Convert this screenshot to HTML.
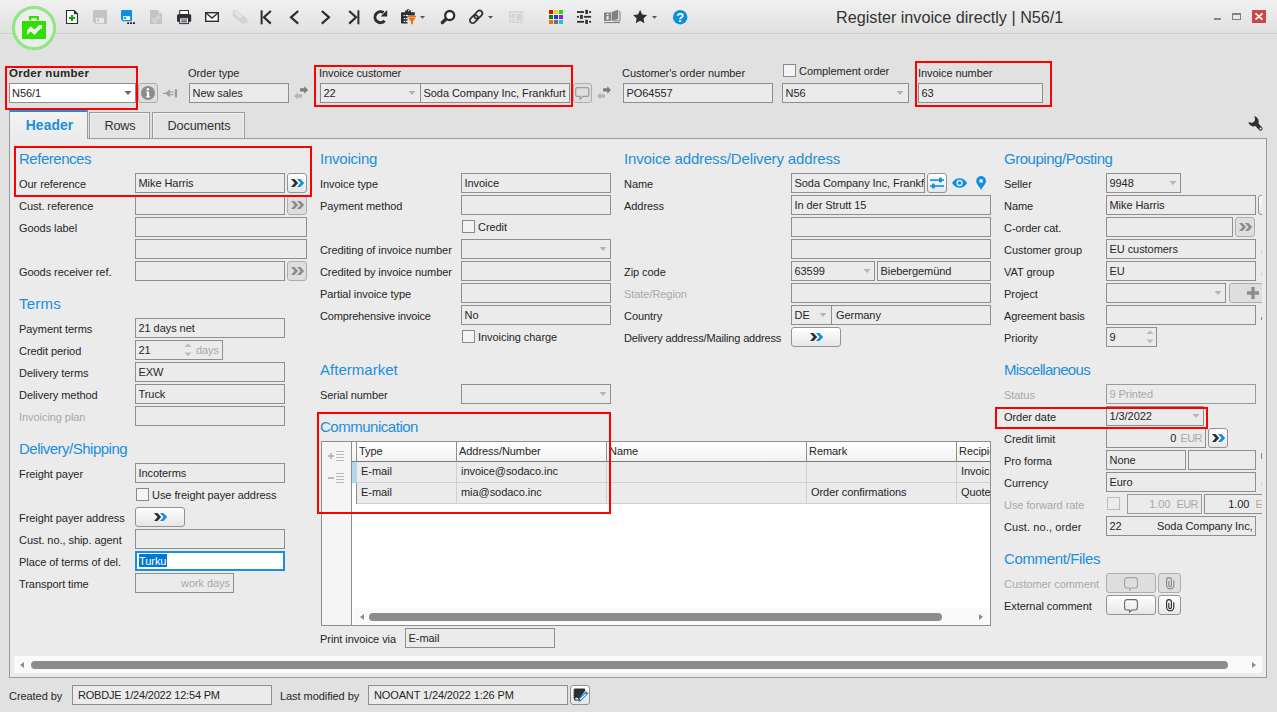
<!DOCTYPE html><html><head><meta charset="utf-8"><title>Register invoice directly | N56/1</title><style>
*{box-sizing:border-box;margin:0;padding:0}
html,body{width:1277px;height:712px;overflow:hidden;background:#e1e1e1}
body{font-family:"Liberation Sans",sans-serif;font-size:11px;color:#262626;position:relative;letter-spacing:-0.06px}
.a{position:absolute;white-space:nowrap}
#tb{left:0;top:0;width:1277px;height:33px;background:linear-gradient(#f0f0f0,#e1e1e1)}
#tbl{left:0;top:33px;width:1277px;height:1px;background:#d0d0d0}
.i{position:absolute;height:20px;border:1px solid #8e8e8e;background:#ebebeb;line-height:18px;padding:0 3px 0 2.500px;white-space:nowrap;overflow:hidden}
.i.o{background:#ebebeb}
.i.w{background:#fff}
.i.d{color:#a9a9a9;border-color:#9a9a9a}
.i.r{text-align:right;padding-right:3px}
.e{letter-spacing:-0.55px}
.l{position:absolute;height:20px;line-height:22px;white-space:nowrap}
.l.d{color:#a9a9a9}
.l.c{line-height:20px}
.l.b{font-weight:bold;font-size:11.5px;letter-spacing:0.3px}
.t{position:absolute;font-size:15px;color:#1b8fdc;height:20px;line-height:22px;white-space:nowrap;letter-spacing:-0.45px}
.bt{position:absolute;height:20px;border:1px solid #939393;border-radius:3px;background:linear-gradient(#ffffff,#e6e6e6)}
.bt.d{background:#dedede;border-color:#adadad}
.bt svg{position:absolute;left:50%;top:50%}
.cb{position:absolute;width:13px;height:13px;border:1px solid #8a8a8a;background:#f4f4f4}
.cb.d{border-color:#bdbdbd;background:#ececec}
.red{position:absolute;border:2px solid #fd0000}
.g{color:#a9a9a9}
svg{position:absolute;overflow:visible}
</style></head><body>
<div id="tb" class="a"></div><div id="tbl" class="a"></div>
<svg style="left:11px;top:5px" width="46" height="46" viewBox="0 0 46 46">
<circle cx="23" cy="23" r="20.600" fill="#ededed" stroke="#8fe883" stroke-width="3.200"/>
<rect x="11" y="16" width="24" height="18" rx="0.700" fill="#2fdf00"/>
<path d="M19 15.200V12.200H26.900V15.200" fill="none" stroke="#2fdf00" stroke-width="2.200"/>
<path d="M16 25.200L19.700 21.300 23.300 24.600 27.600 20.900 26.500 20.100H31V24.400L29.900 23.300 23.500 29.900 19.700 26.600 16 29.700z" fill="#f3eef3"/>
</svg>
<svg style="left:66px;top:10px" width="12" height="14" viewBox="0 0 12 14"><path d="M0.500 0.500h7.700L11.500 3.800v9.700H0.500z" fill="#fff" stroke="#2b2f33" stroke-width="1.100"/><path d="M7.900 0.400v3.800h3.800z" fill="#2b2f33"/><path d="M5 4.900h2.100v2h2v2.100h-2v2H5v-2H3V6.900h2z" fill="#0fa514"/></svg>
<svg style="left:93px;top:10px" width="14" height="14" viewBox="0 0 14 14"><path d="M1.5 0h11.5a1 1 0 0 1 1 1v12a1 1 0 0 1-1 1H2.2L0 11.8V1.5A1.5 1.5 0 0 1 1.5 0z" fill="#c4c4c4"/><rect x="2.800" y="7.800" width="8.200" height="5.300" fill="#e9e9e9"/><rect x="4.100" y="8.900" width="1.800" height="2.900" fill="#c4c4c4"/></svg>
<svg style="left:121px;top:10px" width="16" height="15" viewBox="0 0 16 15"><path d="M1.2 0h9a0.8 0.8 0 0 1 0.8 0.8v9.600a0.800 0.800 0 0 1-0.800 0.800H1.800L0 9.600V1.200A1.200 1.200 0 0 1 1.200 0z" fill="#0f8fe2"/><rect x="2.100" y="6.200" width="7" height="3.800" fill="#fff"/><rect x="2.900" y="7.100" width="2.200" height="1.900" fill="#0f8fe2"/><rect x="6.200" y="12.300" width="1.900" height="1.700" fill="#1a1a1a"/><rect x="9.100" y="12.300" width="1.900" height="1.700" fill="#1a1a1a"/><rect x="12" y="12.300" width="1.900" height="1.700" fill="#1a1a1a"/></svg>
<svg style="left:150px;top:10px" width="12" height="14" viewBox="0 0 12 14"><path d="M0 0h8.300L12 3.600V14H0z" fill="#c4c4c4"/><path d="M8.300 0v3.600H12z" fill="#e2e2e2"/><path d="M2.600 8.800l2.300 2.600 5-5.300" fill="none" stroke="#e6e6e6" stroke-width="2.800" stroke-linejoin="miter"/><path d="M2.600 8.800l2.300 2.600 5-5.300" fill="none" stroke="#c4c4c4" stroke-width="1.200"/></svg>
<svg style="left:177px;top:10px" width="15" height="14" viewBox="0 0 15 14"><rect x="2.700" y="0.500" width="8.800" height="4" fill="#fff" stroke="#2b2f33" stroke-width="1"/><rect x="0" y="4.200" width="14.200" height="7.700" rx="1.300" fill="#2b2f33"/><rect x="2.700" y="7.900" width="8.800" height="5.700" fill="#fff" stroke="#2b2f33" stroke-width="1"/><rect x="4.200" y="9.500" width="5.800" height="1" fill="#2b2f33"/><rect x="4.200" y="11.300" width="5.800" height="1" fill="#2b2f33"/></svg>
<svg style="left:205px;top:12px" width="14" height="10" viewBox="0 0 14 10"><rect x="0.7" y="0.7" width="12.6" height="8.6" fill="#fff" stroke="#2b2f33" stroke-width="1.4"/><path d="M1 1l6 5 6-5" fill="none" stroke="#2b2f33" stroke-width="1.4"/></svg>
<svg style="left:232px;top:10px" width="16" height="14" viewBox="0 0 16 14"><path d="M0.800 0.500h3.200L15.300 8.500v4.800H9.500L0.800 6z" fill="#d4d4d4"/><path d="M1.800 1.500h1.900l6.300 4.600v1.800H7.800L1.800 3.300z" fill="#e6e6e6"/></svg>
<svg style="left:260px;top:10px" width="12" height="15" viewBox="0 0 12 15"><rect x="0.6" y="0.3" width="2" height="14" fill="#2b2f33"/><path d="M10.8 1L4 7.3l6.8 6.3" fill="none" stroke="#2b2f33" stroke-width="2.2"/></svg>
<svg style="left:289px;top:10px" width="11" height="15" viewBox="0 0 11 15"><path d="M9.2 1L2 7.3l7.200 6.3" fill="none" stroke="#2b2f33" stroke-width="2.2"/></svg>
<svg style="left:320px;top:10px" width="11" height="15" viewBox="0 0 11 15"><path d="M1.800 1L9 7.3l-7.200 6.3" fill="none" stroke="#2b2f33" stroke-width="2.2"/></svg>
<svg style="left:348px;top:10px" width="12" height="15" viewBox="0 0 12 15"><rect x="9.4" y="0.3" width="2" height="14" fill="#2b2f33"/><path d="M1.2 1L8 7.3l-6.800 6.3" fill="none" stroke="#2b2f33" stroke-width="2.2"/></svg>
<svg style="left:373px;top:10px" width="15" height="15" viewBox="0 0 15 15"><path d="M11.600 10.800A5.500 5.500 0 1 1 10.600 2.600" fill="none" stroke="#2b2f33" stroke-width="3"/><path d="M14.200 0v6.400H7.600z" fill="#2b2f33"/></svg>
<svg style="left:401px;top:9px" width="16" height="17" viewBox="0 0 16 17"><path d="M0.800 3.200h3.400v-1.600h1.400a1.500 1.500 0 0 1 3 0h1.400v1.600h3.800v3.200H6.500v8.100H0.800a0.800 0.800 0 0 1-0.800-0.800V4a0.800 0.800 0 0 1 0.800-0.800z" fill="#2b2f33"/><circle cx="7.500" cy="1.700" r="0.700" fill="#f0f0f0"/><g fill="#f0f0f0"><rect x="2.700" y="5.900" width="1.200" height="1.200"/><rect x="4.700" y="5.900" width="2.400" height="1.200"/><rect x="2.700" y="9" width="1.200" height="1.200"/><rect x="4.700" y="9" width="2" height="1.200"/><rect x="2.700" y="11.800" width="1.200" height="1.200"/><rect x="4.700" y="11.800" width="2.300" height="1.200"/></g><path d="M6.700 6.900h8.300v1.100H6.700z" fill="#f06a10"/><path d="M6.900 8.600h7.900L12 12.200v3.600l-2.100-1.500v-2.100z" fill="#f06a10"/></svg>
<svg style="left:420.0px;top:16px" width="5" height="3" viewBox="0 0 5 3"><path d="M0 0h5L2.500 2.800z" fill="#555"/></svg>
<svg style="left:440px;top:10px" width="16" height="15" viewBox="0 0 16 15"><circle cx="9.700" cy="5.500" r="4.500" fill="#fff" stroke="#2b2f33" stroke-width="2.300"/><path d="M5.600 9.600L2.400 12.500" stroke="#2b2f33" stroke-width="3.400" stroke-linecap="round"/></svg>
<svg style="left:468px;top:10px" width="16" height="15" viewBox="0 0 16 15"><g fill="none" stroke="#2b2f33" stroke-width="1.700" transform="rotate(-45 8.100 6.900)"><rect x="0.400" y="4.100" width="9.200" height="5.600" rx="2.800"/><rect x="6.600" y="4.100" width="9.200" height="5.600" rx="2.800"/></g></svg>
<svg style="left:487.5px;top:16px" width="5" height="3" viewBox="0 0 5 3"><path d="M0 0h5L2.500 2.800z" fill="#555"/></svg>
<svg style="left:509px;top:11px" width="14" height="12" viewBox="0 0 14 12"><rect x="0.700" y="0.700" width="12.600" height="10.600" rx="1" fill="none" stroke="#d4d4d4" stroke-width="1.400"/><rect x="2.300" y="2.700" width="3.700" height="4.300" fill="#d4d4d4"/><rect x="2.300" y="8" width="3.700" height="1.700" fill="#d4d4d4"/><rect x="7.200" y="2.700" width="4.800" height="7" fill="#d4d4d4"/></svg>
<svg style="left:549px;top:10px" width="14" height="14" viewBox="0 0 14 14"><rect x="0" y="0" width="4" height="4" fill="#d01010"/><rect x="5" y="0" width="4" height="4" fill="#e8d800"/><rect x="10" y="0" width="4" height="4" fill="#20dd10"/><rect x="0" y="5" width="4" height="4" fill="#108010"/><rect x="5" y="5" width="4" height="4" fill="#1040d0"/><rect x="10" y="5" width="4" height="4" fill="#a010e0"/><rect x="0" y="10" width="4" height="4" fill="#e87010"/><rect x="5" y="10" width="4" height="4" fill="#707070"/><rect x="10" y="10" width="4" height="4" fill="#10c8d8"/></svg>
<svg style="left:577px;top:10px" width="14" height="14" viewBox="0 0 14 14"><g fill="#2b2f33"><rect x="0" y="1.100" width="7" height="1.800"/><rect x="8.300" y="-0.200" width="2.600" height="4.200" rx="0.500"/><rect x="12" y="1.100" width="2.100" height="1.800"/><rect x="0" y="5.900" width="2" height="1.800"/><rect x="3.100" y="4.700" width="2.600" height="4.200" rx="0.500"/><rect x="6.800" y="5.900" width="7.300" height="1.800"/><rect x="0" y="10.900" width="7" height="1.800"/><rect x="8.300" y="9.700" width="2.600" height="4.200" rx="0.500"/><rect x="12" y="10.900" width="2.100" height="1.800"/></g></svg>
<svg style="left:604px;top:9px" width="17" height="15" viewBox="0 0 17 15"><path d="M0 3.500h6.900v8.400H0z" fill="#828282"/><path d="M7.600 3L14.200 0.800v9.300L7.600 11.900z" fill="#828282"/><path d="M14.900 2.700h1.100v9.200H9.500" fill="none" stroke="#828282" stroke-width="1"/><rect x="0" y="13" width="16" height="1.100" fill="#828282"/><rect x="2.600" y="4.800" width="2" height="1.300" fill="#f0f0f0"/><rect x="2.600" y="7.100" width="2" height="3.600" fill="#f0f0f0"/></svg>
<svg style="left:633px;top:10px" width="14.2" height="13.2" viewBox="0 0 15 14.200"><path d="M7.500 0l2.300 4.800 5.200 0.700-3.800 3.600 1 5.100-4.700-2.500-4.700 2.500 1-5.100L0 5.500l5.200-0.700z" fill="#2b2f33"/></svg>
<svg style="left:652.0px;top:16px" width="5" height="3" viewBox="0 0 5 3"><path d="M0 0h5L2.500 2.800z" fill="#555"/></svg>
<svg style="left:673px;top:9.800px" width="14.400" height="14.400" viewBox="0 0 15 15"><circle cx="7.500" cy="7.500" r="7.500" fill="#0c8fe0"/><text x="7.500" y="12.300" font-family="Liberation Sans,sans-serif" font-weight="bold" font-size="13.500" fill="#fff" text-anchor="middle">?</text></svg>
<div class="a" style="left:836px;top:7px;font-size:16.2px;line-height:20px;color:#333;letter-spacing:0">Register invoice directly | N56/1</div>
<div class="a" style="left:1214px;top:18px;width:7px;height:2px;background:#858585"></div>
<div class="a" style="left:1232px;top:13px;width:9px;height:7px;border:1px solid #808080;border-top-width:2px"></div>
<div class="a" style="left:1252px;top:10px;width:14px;height:13px;background:#c9474b"></div>
<svg style="left:1255px;top:13px" width="8" height="7" viewBox="0 0 8 7"><path d="M0.500 0.300l7 6.400M7.500 0.300L0.500 6.700" stroke="#fff" stroke-width="1.700"/></svg>
<div class="l b" style="left:9px;top:62px">Order number</div>
<div class="i w" style="left:9px;top:83px;width:127px;padding-left:2px">N56/1</div>
<svg style="left:124px;top:91px" width="8" height="4" viewBox="0 0 8 4"><path d="M0.5 0h7L4 4z" fill="#666"/></svg>
<div class="bt d" style="left:138px;top:83px;width:20px;height:20px"><svg width="14" height="14" viewBox="0 0 14 14" style="margin:-7px 0 0 -7px"><circle cx="7" cy="7" r="7" fill="#8c8c8c"/><path d="M5 5.400h3.100v5h1.100v1.200H4.800v-1.200h1.100V6.600H5z" fill="#fff"/><circle cx="6.900" cy="3.300" r="1.250" fill="#fff"/></svg></div>
<svg style="left:163px;top:89px" width="15" height="9" viewBox="0 0 15 9"><g fill="#9c9c9c"><rect x="0" y="3.700" width="3.500" height="1.300"/><path d="M2.300 4.350L6.800 0.300v8.100z"/><rect x="6.800" y="2.500" width="3.600" height="1.100"/><rect x="6.800" y="5.100" width="3.600" height="1.100"/><rect x="11.800" y="0.300" width="2.300" height="8"/></g></svg>
<div class="l " style="left:188px;top:62px">Order type</div>
<div class="i o" style="left:189px;top:83px;width:100px;">New sales</div>
<svg style="left:294px;top:86px" width="14" height="14" viewBox="0 0 14 14"><path d="M6.100 2.300h4.200V0.200L14 4l-3.700 3.700V5.600H6.100z" fill="#7c7c7c"/><path d="M8 8.200H3.500V6.300L0.200 10l3.300 3.600v-1.900H8z" fill="#b6b6b6"/></svg>
<div class="l " style="left:319px;top:62px">Invoice customer</div>
<div class="i o" style="left:320px;top:83px;width:101px;">22</div>
<svg style="left:408px;top:91px" width="8" height="4" viewBox="0 0 8 4"><path d="M0.5 0h7L4 4z" fill="#b0b0b0"/></svg>
<div class="i o" style="left:420px;top:83px;width:150px;">Soda Company Inc, Frankfurt</div>
<div class="bt d" style="left:573px;top:83px;width:19px;height:20px"><svg width="14.500" height="13.500" viewBox="0 0 13 12" style="margin:-6.500px 0 0 -7.200px"><path d="M2 0.600h9a1.400 1.400 0 0 1 1.400 1.400v5a1.400 1.400 0 0 1-1.400 1.400H7L4.500 11V8.400H2A1.400 1.400 0 0 1 0.600 7V2A1.400 1.400 0 0 1 2 0.600z" fill="none" stroke="#9c9c9c" stroke-width="1.100"/></svg></div>
<svg style="left:597px;top:86px" width="14" height="14" viewBox="0 0 14 14"><path d="M6.100 2.300h4.200V0.200L14 4l-3.700 3.700V5.600H6.100z" fill="#7c7c7c"/><path d="M8 8.200H3.500V6.300L0.200 10l3.300 3.600v-1.900H8z" fill="#b6b6b6"/></svg>
<div class="l " style="left:622px;top:62px">Customer's order number</div>
<div class="i o" style="left:623px;top:83px;width:150px;">PO64557</div>
<div class="cb " style="left:783px;top:64px"></div>
<div class="l c" style="left:799px;top:61px">Complement order</div>
<div class="i o" style="left:782px;top:83px;width:127px;">N56</div>
<svg style="left:896px;top:91px" width="8" height="4" viewBox="0 0 8 4"><path d="M0.5 0h7L4 4z" fill="#b0b0b0"/></svg>
<div class="l " style="left:918px;top:62px">Invoice number</div>
<div class="i o" style="left:918px;top:83px;width:125px;">63</div>
<div class="red" style="left:5px;top:66px;width:133px;height:44px"></div>
<div class="red" style="left:314px;top:65px;width:259px;height:42px"></div>
<div class="red" style="left:915px;top:61px;width:137px;height:46px"></div>
<div class="a" style="left:89px;top:112px;width:61px;height:27px;border:1px solid #9a9a9a;background:#e4e4e4;box-shadow:inset 1px 1px 0 #f2f2f2,inset -1px 0 0 #f2f2f2"></div>
<div class="a" style="left:152px;top:112px;width:93px;height:27px;border:1px solid #9a9a9a;background:#e4e4e4;box-shadow:inset 1px 1px 0 #f2f2f2,inset -1px 0 0 #f2f2f2"></div>
<div class="a" style="left:89px;top:112px;width:61px;height:26px;line-height:29px;text-align:center;font-size:12.7px;color:#333;letter-spacing:-0.15px;padding-left:1px">Rows</div>
<div class="a" style="left:152px;top:112px;width:93px;height:26px;line-height:29px;text-align:center;font-size:12.7px;color:#333;letter-spacing:-0.15px;padding-left:1px">Documents</div>
<svg style="left:1247.5px;top:116.3px" width="15" height="15" viewBox="0 0 15 15"><circle cx="5.600" cy="5.400" r="5.100" fill="#2b2f33"/><circle cx="3.300" cy="3.100" r="3.700" fill="#e1e1e1"/><path d="M0 0h6.500L0 6.500z" fill="#e1e1e1"/><path d="M7.600 7.400L12.600 12.600" stroke="#2b2f33" stroke-width="3.900" stroke-linecap="round"/><circle cx="12.600" cy="12.600" r="1" fill="#f4f4f4"/></svg>
<div class="a" style="left:9px;top:138px;width:1258px;height:540px;border:1px solid #9a9a9a;background:#ebebeb"></div>
<div class="a" style="left:9px;top:110px;width:79px;height:29px;border:1px solid #9a9a9a;border-bottom:none;border-top:2px solid #1a8fe0;background:linear-gradient(#f3f3f3,#ebebeb)"></div>
<div class="a" style="left:9px;top:112px;width:79px;height:26px;line-height:27px;text-align:center;font-size:13.800px;font-weight:bold;color:#1a8fdc;letter-spacing:0.1px;padding-left:2px">Header</div>
<div class="a" style="left:14px;top:140px;width:1248px;height:516px;overflow:hidden"><div style="position:absolute;left:-14px;top:-140px;width:1277px;height:712px">
<div class="t" style="left:19px;top:148px;letter-spacing:-0.47px">References</div>
<div class="l " style="left:19px;top:173px">Our reference</div>
<div class="i " style="left:135px;top:173px;width:150px;">Mike Harris</div>
<div class="bt " style="left:287px;top:173px;width:20px;height:20px"><svg width="14" height="8" viewBox="0 0 14 8" style="margin:-4px 0 0 -6.200px"><path d="M0 0h3.4L7.2 4 3.4 8H0L3.6 4z" fill="#2b2f33"/><path d="M6 0h3.4L13.2 4 9.4 8H6L9.6 4z" fill="#0f8de0"/></svg></div>
<div class="l " style="left:19px;top:195px">Cust. reference</div>
<div class="i " style="left:135px;top:195px;width:150px;"></div>
<div class="bt d" style="left:287px;top:195px;width:20px;height:20px"><svg width="14" height="8" viewBox="0 0 14 8" style="margin:-4px 0 0 -6.200px"><path d="M0 0h3.4L7.2 4 3.4 8H0L3.6 4z" fill="#8c8c8c"/><path d="M6 0h3.4L13.2 4 9.4 8H6L9.6 4z" fill="#8c8c8c"/></svg></div>
<div class="l " style="left:19px;top:217px">Goods label</div>
<div class="i " style="left:135px;top:217px;width:172px;"></div>
<div class="i " style="left:135px;top:239px;width:172px;"></div>
<div class="l " style="left:19px;top:261px">Goods receiver ref.</div>
<div class="i " style="left:135px;top:261px;width:150px;"></div>
<div class="bt d" style="left:287px;top:261px;width:20px;height:20px"><svg width="14" height="8" viewBox="0 0 14 8" style="margin:-4px 0 0 -6.200px"><path d="M0 0h3.4L7.2 4 3.4 8H0L3.6 4z" fill="#8c8c8c"/><path d="M6 0h3.4L13.2 4 9.4 8H6L9.6 4z" fill="#8c8c8c"/></svg></div>
<div class="t" style="left:19px;top:293px;letter-spacing:0.21px">Terms</div>
<div class="l " style="left:19px;top:318px">Payment terms</div>
<div class="i " style="left:135px;top:318px;width:150px;">21 days net</div>
<div class="l " style="left:19px;top:340px">Credit period</div>
<div class="i " style="left:135px;top:340px;width:88px;">21<span class="g" style="position:absolute;left:60px">days</span></div>
<svg style="left:183.5px;top:343px" width="8" height="14" viewBox="0 0 8 14"><path d="M0.5 4h7L4 0.3z" fill="#bcbcbc"/><path d="M0.5 9.6h7L4 13.3z" fill="#bcbcbc"/></svg>
<div class="l " style="left:19px;top:362px">Delivery terms</div>
<div class="i " style="left:135px;top:362px;width:150px;">EXW</div>
<div class="l " style="left:19px;top:384px">Delivery method</div>
<div class="i " style="left:135px;top:384px;width:150px;">Truck</div>
<div class="l d" style="left:19px;top:406px">Invoicing plan</div>
<div class="i " style="left:135px;top:406px;width:150px;"></div>
<div class="t" style="left:19px;top:438px;letter-spacing:-0.51px">Delivery/Shipping</div>
<div class="l " style="left:19px;top:463px">Freight payer</div>
<div class="i " style="left:135px;top:463px;width:150px;">Incoterms</div>
<div class="cb " style="left:136px;top:488px"></div>
<div class="l c" style="left:152px;top:485px">Use freight payer address</div>
<div class="l " style="left:19px;top:507px">Freight payer address</div>
<div class="bt " style="left:135px;top:507px;width:50px;height:20px"><svg width="14" height="8" viewBox="0 0 14 8" style="margin:-4px 0 0 -6.200px"><path d="M0 0h3.4L7.2 4 3.4 8H0L3.6 4z" fill="#2b2f33"/><path d="M6 0h3.4L13.2 4 9.4 8H6L9.6 4z" fill="#0f8de0"/></svg></div>
<div class="l " style="left:19px;top:529px">Cust. no., ship. agent</div>
<div class="i " style="left:135px;top:529px;width:150px;"></div>
<div class="l " style="left:19px;top:551px">Place of terms of del.</div>
<div class="i w" style="left:135px;top:551px;width:150px;border:2px solid #1a8fe0;line-height:16px;padding:0 2px"><span style="background:#0078d7;color:#fff;display:inline-block;height:13px;line-height:14px;margin-top:0;padding-right:1px;vertical-align:top;position:relative;top:1px">Turku</span></div>
<div class="l " style="left:19px;top:573px">Transport time</div>
<div class="i r" style="left:135px;top:573px;width:99px;"><span class="g">work days</span></div>
<div class="t" style="left:320px;top:148px;letter-spacing:-0.22px">Invoicing</div>
<div class="l " style="left:320px;top:173px">Invoice type</div>
<div class="i " style="left:461px;top:173px;width:150px;">Invoice</div>
<div class="l " style="left:320px;top:195px">Payment method</div>
<div class="i " style="left:461px;top:195px;width:150px;"></div>
<div class="cb " style="left:462px;top:220px"></div>
<div class="l c" style="left:478px;top:217px">Credit</div>
<div class="l " style="left:320px;top:239px;letter-spacing:-0.08px">Crediting of invoice number</div>
<div class="i " style="left:461px;top:239px;width:150px;"></div>
<svg style="left:599px;top:247px" width="8" height="4" viewBox="0 0 8 4"><path d="M0.5 0h7L4 4z" fill="#b5b5b5"/></svg>
<div class="l " style="left:320px;top:261px;letter-spacing:-0.08px">Credited by invoice number</div>
<div class="i " style="left:461px;top:261px;width:150px;"></div>
<div class="l " style="left:320px;top:283px">Partial invoice type</div>
<div class="i " style="left:461px;top:283px;width:150px;"></div>
<div class="l " style="left:320px;top:305px;letter-spacing:-0.17px">Comprehensive invoice</div>
<div class="i " style="left:461px;top:305px;width:150px;">No</div>
<div class="cb " style="left:462px;top:330px"></div>
<div class="l c" style="left:478px;top:327px">Invoicing charge</div>
<div class="t" style="left:320px;top:359px;letter-spacing:0.02px">Aftermarket</div>
<div class="l " style="left:320px;top:384px">Serial number</div>
<div class="i " style="left:461px;top:384px;width:150px;"></div>
<svg style="left:599px;top:392px" width="8" height="4" viewBox="0 0 8 4"><path d="M0.5 0h7L4 4z" fill="#b5b5b5"/></svg>
<div class="t" style="left:320px;top:416px;letter-spacing:-0.48px">Communication</div>
<div class="a" style="left:321px;top:441px;width:670px;height:185px;border:1px solid #8e8e8e;background:#fff;overflow:hidden">
<div class="a" style="left:0;top:0;width:30px;height:183px;background:#f5f5f5;border-right:1px solid #8e8e8e"></div>
<div class="a" style="left:30px;top:0;width:5px;height:62px;border-right:1px solid #8e8e8e;background:#fff"></div>
<div class="a" style="left:35px;top:0;width:640px;height:20px;background:linear-gradient(#fff,#f2f2f2);border-bottom:1px solid #7a7a7a"></div>
<div class="a" style="left:30px;top:0;width:5px;height:20px;border-bottom:1px solid #7a7a7a;border-right:1px solid #8e8e8e;background:linear-gradient(#fff,#f2f2f2)"></div>
<div class="a" style="left:37px;top:0;height:19px;line-height:19px">Type</div>
<div class="a" style="left:137px;top:0;height:19px;line-height:19px">Address/Number</div>
<div class="a" style="left:287px;top:0;height:19px;line-height:19px">Name</div>
<div class="a" style="left:487px;top:0;height:19px;line-height:19px">Remark</div>
<div class="a" style="left:637px;top:0;height:19px;line-height:19px">Recipient</div>
<div class="a" style="left:134px;top:0;width:1px;height:20px;background:#8e8e8e"></div>
<div class="a" style="left:284px;top:0;width:1px;height:20px;background:#8e8e8e"></div>
<div class="a" style="left:484px;top:0;width:1px;height:20px;background:#8e8e8e"></div>
<div class="a" style="left:634px;top:0;width:1px;height:20px;background:#8e8e8e"></div>
<div class="a" style="left:35px;top:20px;width:640px;height:21px;background:#ebebeb;border-bottom:1px solid #cfcfcf"></div>
<div class="a" style="left:134px;top:20px;width:1px;height:21px;background:#cfcfcf"></div>
<div class="a" style="left:284px;top:20px;width:1px;height:21px;background:#cfcfcf"></div>
<div class="a" style="left:484px;top:20px;width:1px;height:21px;background:#cfcfcf"></div>
<div class="a" style="left:634px;top:20px;width:1px;height:21px;background:#cfcfcf"></div>
<div class="a" style="left:39px;top:19px;height:20px;line-height:20px">E-mail</div>
<div class="a" style="left:139px;top:19px;height:20px;line-height:20px">invoice@sodaco.inc</div>
<div class="a" style="left:639px;top:19px;height:20px;line-height:20px">Invoice</div>
<div class="a" style="left:35px;top:41px;width:640px;height:21px;background:#ebebeb;border-bottom:1px solid #cfcfcf"></div>
<div class="a" style="left:134px;top:41px;width:1px;height:21px;background:#cfcfcf"></div>
<div class="a" style="left:284px;top:41px;width:1px;height:21px;background:#cfcfcf"></div>
<div class="a" style="left:484px;top:41px;width:1px;height:21px;background:#cfcfcf"></div>
<div class="a" style="left:634px;top:41px;width:1px;height:21px;background:#cfcfcf"></div>
<div class="a" style="left:39px;top:40px;height:20px;line-height:20px">E-mail</div>
<div class="a" style="left:139px;top:40px;height:20px;line-height:20px">mia@sodaco.inc</div>
<div class="a" style="left:489px;top:40px;height:20px;line-height:20px">Order confirmations</div>
<div class="a" style="left:639px;top:40px;height:20px;line-height:20px">Quote</div>
<div class="a" style="left:30px;top:20px;width:5px;height:21px;background:#b3d6ef"></div>
<svg style="left:6px;top:9px" width="16" height="10" viewBox="0 0 16 10"><g fill="#b8b8b8"><rect x="8" y="0" width="8" height="1"/><rect x="8" y="3" width="8" height="1"/><rect x="8" y="6" width="8" height="1"/><rect x="8" y="9" width="8" height="1"/><rect x="0" y="4" width="6" height="2"/><rect x="2" y="2" width="2" height="6"/></g></svg>
<svg style="left:6px;top:31px" width="16" height="10" viewBox="0 0 16 10"><g fill="#b8b8b8"><rect x="8" y="0" width="8" height="1"/><rect x="8" y="3" width="8" height="1"/><rect x="8" y="6" width="8" height="1"/><rect x="8" y="9" width="8" height="1"/><rect x="0" y="4" width="6" height="2"/></g></svg>
<div class="a" style="left:31px;top:166px;width:638px;height:17px;background:#fafafa"></div>
<div class="a" style="left:47px;top:171px;width:573px;height:8px;border-radius:4px;background:#8c8c8c"></div>
<svg style="left:38px;top:172px" width="4" height="6" viewBox="0 0 4 6"><path d="M4 0v6L0 3z" fill="#8c8c8c"/></svg>
<svg style="left:657px;top:172px" width="4" height="6" viewBox="0 0 4 6"><path d="M0 0v6L4 3z" fill="#8c8c8c"/></svg>
</div>
<div class="l " style="left:320px;top:628px">Print invoice via</div>
<div class="i " style="left:405px;top:628px;width:150px;">E-mail</div>
<div class="t" style="left:624px;top:148px;letter-spacing:-0.15px">Invoice address/Delivery address</div>
<div class="l " style="left:624px;top:173px">Name</div>
<div class="i " style="left:791px;top:173px;width:134px;">Soda Company Inc, Frankfurt</div>
<div class="bt " style="left:927px;top:173px;width:20px;height:20px"><svg width="14" height="12" viewBox="0 0 14 12" style="margin:-6px 0 0 -7px"><g fill="#0f8fe2"><rect x="0" y="2.300" width="14" height="1.600"/><rect x="9" y="0.500" width="2.900" height="5" rx="1.300"/><rect x="0" y="8.200" width="14" height="1.600"/><rect x="1.900" y="6.500" width="2.900" height="5" rx="1.300"/></g></svg></div>
<svg style="left:951.5px;top:178px" width="15.2" height="10" viewBox="0 0 16 10"><path d="M0 5C2.500 1.300 5 0 8 0s5.500 1.300 8 5c-2.500 3.700-5 5-8 5S2.500 8.700 0 5z" fill="#0f8fe2"/><circle cx="8" cy="5" r="3.300" fill="#ebebeb"/><circle cx="8" cy="5" r="1.900" fill="#0f8fe2"/></svg>
<svg style="left:976px;top:176.2px" width="10.2" height="14" viewBox="0 0 10 13.500"><path d="M5 0a4.800 4.800 0 0 1 4.800 4.800C9.800 7.800 6.500 10.500 5 13.500 3.500 10.500 0.200 7.800 0.200 4.800A4.800 4.800 0 0 1 5 0z" fill="#0f8fe2"/><circle cx="5" cy="4.700" r="1.900" fill="#ebebeb"/></svg>
<div class="l " style="left:624px;top:195px">Address</div>
<div class="i " style="left:791px;top:195px;width:200px;">In der Strutt 15</div>
<div class="i " style="left:791px;top:217px;width:200px;"></div>
<div class="i " style="left:791px;top:239px;width:200px;"></div>
<div class="l " style="left:624px;top:261px">Zip code</div>
<div class="i " style="left:791px;top:261px;width:84px;">63599</div>
<svg style="left:863px;top:269px" width="8" height="4" viewBox="0 0 8 4"><path d="M0.5 0h7L4 4z" fill="#b5b5b5"/></svg>
<div class="i " style="left:877px;top:261px;width:114px;">Biebergemünd</div>
<div class="l d" style="left:624px;top:283px">State/Region</div>
<div class="i " style="left:791px;top:283px;width:200px;"></div>
<div class="l " style="left:624px;top:305px">Country</div>
<div class="i " style="left:791px;top:305px;width:41px;">DE</div>
<svg style="left:819px;top:313px" width="8" height="4" viewBox="0 0 8 4"><path d="M0.5 0h7L4 4z" fill="#b5b5b5"/></svg>
<div class="i " style="left:831px;top:305px;width:160px;padding-left:4px">Germany</div>
<div class="l " style="left:624px;top:327px;letter-spacing:-0.15px">Delivery address/Mailing address</div>
<div class="bt " style="left:791px;top:327px;width:50px;height:20px"><svg width="14" height="8" viewBox="0 0 14 8" style="margin:-4px 0 0 -6.200px"><path d="M0 0h3.4L7.2 4 3.4 8H0L3.6 4z" fill="#2b2f33"/><path d="M6 0h3.4L13.2 4 9.4 8H6L9.6 4z" fill="#0f8de0"/></svg></div>
<div class="t" style="left:1004px;top:148px;letter-spacing:-0.47px">Grouping/Posting</div>
<div class="l " style="left:1004px;top:173px">Seller</div>
<div class="i " style="left:1106px;top:173px;width:75px;">9948</div>
<svg style="left:1169px;top:181px" width="8" height="4" viewBox="0 0 8 4"><path d="M0.5 0h7L4 4z" fill="#b5b5b5"/></svg>
<div class="l " style="left:1004px;top:195px">Name</div>
<div class="i " style="left:1106px;top:195px;width:150px;">Mike Harris</div>
<div class="bt " style="left:1258px;top:195px;width:20px;height:20px"></div>
<div class="l " style="left:1004px;top:217px">C-order cat.</div>
<div class="i " style="left:1106px;top:217px;width:127px;"></div>
<div class="bt d" style="left:1235px;top:217px;width:20px;height:20px"><svg width="14" height="8" viewBox="0 0 14 8" style="margin:-4px 0 0 -6.200px"><path d="M0 0h3.4L7.2 4 3.4 8H0L3.6 4z" fill="#8c8c8c"/><path d="M6 0h3.4L13.2 4 9.4 8H6L9.6 4z" fill="#8c8c8c"/></svg></div>
<div class="l " style="left:1004px;top:239px">Customer group</div>
<div class="i " style="left:1106px;top:239px;width:150px;">EU customers</div>
<div class="l " style="left:1004px;top:261px">VAT group</div>
<div class="i " style="left:1106px;top:261px;width:150px;">EU</div>
<div class="l " style="left:1004px;top:283px">Project</div>
<div class="i " style="left:1106px;top:283px;width:120px;"></div>
<svg style="left:1214px;top:291px" width="8" height="4" viewBox="0 0 8 4"><path d="M0.5 0h7L4 4z" fill="#b5b5b5"/></svg>
<div class="bt d" style="left:1228.5px;top:283px;width:50px;height:20px"><svg width="12" height="12" viewBox="0 0 11 11" style="margin:-6.300px 0 0 -6.500px"><path d="M4 0h3v4h4v3H7v4H4V7H0V4h4z" fill="#8c8c8c"/></svg></div>
<div class="l " style="left:1004px;top:305px;letter-spacing:-0.13px">Agreement basis</div>
<div class="i " style="left:1106px;top:305px;width:150px;"></div>
<div class="l " style="left:1004px;top:327px">Priority</div>
<div class="i " style="left:1106px;top:327px;width:51px;">9</div>
<svg style="left:1145.5px;top:330px" width="8" height="14" viewBox="0 0 8 14"><path d="M0.5 4h7L4 0.3z" fill="#bcbcbc"/><path d="M0.5 9.6h7L4 13.3z" fill="#bcbcbc"/></svg>
<div class="t" style="left:1004px;top:359px;letter-spacing:-0.7px">Miscellaneous</div>
<div class="l d" style="left:1004px;top:384px">Status</div>
<div class="i d" style="left:1106px;top:384px;width:150px;">9 Printed</div>
<div class="l " style="left:1004px;top:406px">Order date</div>
<div class="i " style="left:1106px;top:406px;width:98px;">1/3/2022</div>
<svg style="left:1192px;top:414px" width="8" height="4" viewBox="0 0 8 4"><path d="M0.5 0h7L4 4z" fill="#b5b5b5"/></svg>
<div class="l " style="left:1004px;top:428px">Credit limit</div>
<div class="i r" style="left:1106px;top:428px;width:100px;">0<span class="g e" style="margin-left:4px">EUR</span></div>
<div class="bt " style="left:1208px;top:428px;width:20px;height:20px"><svg width="14" height="8" viewBox="0 0 14 8" style="margin:-4px 0 0 -6.200px"><path d="M0 0h3.4L7.2 4 3.4 8H0L3.6 4z" fill="#2b2f33"/><path d="M6 0h3.4L13.2 4 9.4 8H6L9.6 4z" fill="#0f8de0"/></svg></div>
<div class="l " style="left:1004px;top:450px">Pro forma</div>
<div class="i " style="left:1106px;top:450px;width:80px;">None</div>
<div class="i " style="left:1188px;top:450px;width:68px;"></div>
<div class="l " style="left:1004px;top:472px">Currency</div>
<div class="i " style="left:1106px;top:472px;width:150px;">Euro</div>
<div class="l d" style="left:1004px;top:494px">Use forward rate</div>
<div class="cb d" style="left:1107px;top:497px"></div>
<div class="i r d" style="left:1127px;top:494px;width:75px;">1.00&nbsp; <span class="e">EUR</span></div>
<div class="i r" style="left:1204px;top:494px;width:77px;">1.00&nbsp; <span class="g e">EUR</span></div>
<div class="l " style="left:1004px;top:516px;letter-spacing:0.1px">Cust. no., order</div>
<div class="i " style="left:1106px;top:516px;width:150px;">22<span style="position:absolute;left:50px">Soda Company Inc, Frankfurt</span></div>
<div class="t" style="left:1004px;top:548px;letter-spacing:-0.37px">Comment/Files</div>
<div class="l d" style="left:1004px;top:573px">Customer comment</div>
<div class="bt d" style="left:1106px;top:573px;width:50px;height:20px"><svg width="14" height="13.500" viewBox="0 0 14 13.500" style="margin:-6.500px 0 0 -7px"><path d="M3 0.600h8a2.400 2.400 0 0 1 2.400 2.400v5.600a2.400 2.400 0 0 1-2.400 2.400H7.700L5.600 13.100 5.400 11H3A2.400 2.400 0 0 1 0.600 8.600V3A2.400 2.400 0 0 1 3 0.600z" fill="none" stroke="#a5a5a5" stroke-width="1.100"/></svg></div>
<div class="bt d" style="left:1158px;top:573px;width:23px;height:20px"><svg width="8.400" height="12.400" viewBox="0 0 8.400 12.400" style="margin:-6.200px 0 0 -3.400px"><path d="M7.800 3.200V8.200a3.600 3.600 0 0 1-7.200 0V3a2.400 2.400 0 0 1 4.800 0V8.300a1.300 1.300 0 0 1-2.600 0V4" fill="none" stroke="#8a8a8a" stroke-width="1.150"/></svg></div>
<div class="l " style="left:1004px;top:595px">External comment</div>
<div class="bt " style="left:1106px;top:595px;width:50px;height:20px"><svg width="14" height="13.500" viewBox="0 0 14 13.500" style="margin:-6.500px 0 0 -7px"><path d="M3 0.600h8a2.400 2.400 0 0 1 2.400 2.400v5.600a2.400 2.400 0 0 1-2.400 2.400H7.700L5.600 13.100 5.400 11H3A2.400 2.400 0 0 1 0.600 8.600V3A2.400 2.400 0 0 1 3 0.600z" fill="none" stroke="#666" stroke-width="1.100"/></svg></div>
<div class="bt " style="left:1158px;top:595px;width:23px;height:20px"><svg width="8.400" height="12.400" viewBox="0 0 8.400 12.400" style="margin:-6.200px 0 0 -3.400px"><path d="M7.800 3.200V8.200a3.600 3.600 0 0 1-7.200 0V3a2.400 2.400 0 0 1 4.800 0V8.300a1.300 1.300 0 0 1-2.600 0V4" fill="none" stroke="#2b2f33" stroke-width="1.150"/></svg></div>
<div class="a" style="left:1261px;top:251px;width:1px;height:3px;background:#cfcfcf"></div>
<div class="a" style="left:1261px;top:273px;width:1px;height:3px;background:#cfcfcf"></div>
<div class="a" style="left:1261px;top:317px;width:1px;height:3px;background:#8a8a8a"></div>
<div class="a" style="left:1261px;top:453px;width:1px;height:6px;background:#8a8a8a"></div>
<div class="a" style="left:1261px;top:483px;width:1px;height:3px;background:#cfcfcf"></div>
<div class="red" style="left:14px;top:146px;width:298px;height:51px"></div>
<div class="red" style="left:317px;top:412px;width:294px;height:102px"></div>
<div class="red" style="left:995px;top:407px;width:213px;height:22px"></div>
</div></div>
<div class="a" style="left:14px;top:656px;width:1248px;height:17px;background:#fafafa"></div>
<div class="a" style="left:31px;top:661px;width:1197px;height:8px;border-radius:4px;background:#8c8c8c"></div>
<svg style="left:20px;top:662px" width="4" height="6" viewBox="0 0 4 6"><path d="M4 0v6L0 3z" fill="#8c8c8c"/></svg>
<svg style="left:1252px;top:662px" width="4" height="6" viewBox="0 0 4 6"><path d="M0 0v6L4 3z" fill="#8c8c8c"/></svg>
<div class="l " style="left:9px;top:685px">Created by</div>
<div class="i o" style="left:72px;top:685px;width:200px;padding-left:5px;letter-spacing:-0.2px">ROBDJE 1/24/2022 12:54 PM</div>
<div class="l " style="left:280px;top:685px">Last modified by</div>
<div class="i o" style="left:368px;top:685px;width:200px;padding-left:5px;letter-spacing:-0.13px">NOOANT 1/24/2022 1:26 PM</div>
<div class="bt " style="left:570px;top:685px;width:20px;height:20px"><svg width="16" height="14" viewBox="0 0 16 14" style="margin:-7px 0 0 -7.500px"><path d="M1.800 0.500h9.600a0.700 0.700 0 0 1 0.700 0.700V3L4.600 12.400H1.800a0.700 0.700 0 0 1-0.700-0.700V1.200a0.700 0.700 0 0 1 0.700-0.700z" fill="#2b2f33"/><g fill="#2b2f33"><rect x="0.300" y="1.600" width="1.500" height="0.900"/><rect x="0.300" y="3.500" width="1.500" height="0.900"/><rect x="0.300" y="5.400" width="1.500" height="0.900"/><rect x="0.300" y="7.300" width="1.500" height="0.900"/><rect x="0.300" y="9.200" width="1.500" height="0.900"/></g><rect x="2.300" y="9.800" width="2.800" height="1.800" rx="0.500" fill="#f2f2f2"/><path d="M13.100 3.300l2.300 2.300-7.800 7.600-2.500 0.300 0.300-2.500z" fill="#1278d0"/><path d="M12.600 5.400l0.800 0.800-5.800 5.700-0.800-0.800z" fill="#fff"/></svg></div>
</body></html>
